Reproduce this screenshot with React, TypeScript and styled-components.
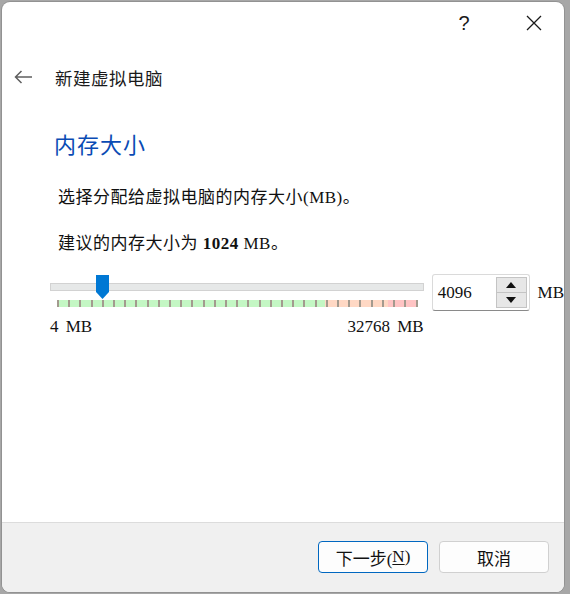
import React from "react";
import styled, { createGlobalStyle } from "styled-components";

const GlobalStyle = createGlobalStyle`
  html, body { margin: 0; padding: 0; background: #a7a7a7; }
  body { width: 570px; height: 594px; overflow: hidden; }
  * { box-sizing: border-box; }
`;

const SERIF_CJK = `"Liberation Serif", "Noto Sans CJK SC", serif`;
const SANS_CJK = `"Noto Sans CJK SC", "Noto Sans", sans-serif`;

const Dialog = styled.div`
  margin: 2px 6px 0 2px;
  height: 590px;
  background: #ffffff;
  border-radius: 8px;
  overflow: hidden;
  display: flex;
  flex-direction: column;
  box-shadow: 0 0 0 1px rgba(0, 0, 0, 0.12);
`;

const TitleBar = styled.div`
  height: 42px;
  display: flex;
  justify-content: flex-end;
  align-items: center;
  padding-right: 10px;
  gap: 30px;
`;

const TitleButton = styled.div`
  width: 40px;
  height: 32px;
  display: flex;
  align-items: center;
  justify-content: center;
  color: #1a1a1a;
  font-family: "Liberation Sans", sans-serif;
  font-size: 20px;
  font-weight: 400;
`;

const HeaderRow = styled.div`
  height: 66px;
  display: flex;
  align-items: center;
  padding-left: 12px;
  gap: 22px;
`;

const HeaderTitle = styled.div`
  font-family: ${SANS_CJK};
  font-size: 17.5px;
  color: #1a1a1a;
  letter-spacing: 0.5px;
`;

const Content = styled.div`
  padding-left: 52px;
  display: flex;
  flex-direction: column;
`;

const Heading = styled.div`
  margin-top: 18px;
  font-family: ${SANS_CJK};
  font-size: 22px;
  line-height: 30px;
  color: #0a4bb4;
  letter-spacing: 1px;
`;

const Paragraph = styled.div<{ $top: number }>`
  margin-top: ${(p) => p.$top}px;
  padding-left: 4px;
  font-family: ${SERIF_CJK};
  font-size: 17px;
  line-height: 24px;
  color: #111;
  letter-spacing: 0.5px;
  b { font-weight: 700; }
`;

const SliderRow = styled.div`
  margin-top: 18px;
  margin-left: -4px;
  display: flex;
  align-items: flex-start;
`;

const SliderColumn = styled.div`
  width: 374px;
  display: flex;
  flex-direction: column;
`;

const TrackArea = styled.div`
  position: relative;
  height: 26px;
  padding-top: 9px;
`;

const Track = styled.div`
  height: 8px;
  background: #e6e8e8;
  border: 1px solid #d2d2d2;
`;

const Handle = styled.svg`
  position: absolute;
  top: 1px;
  width: 13px;
  height: 25px;
`;

const Ticks = styled.div`
  margin: 0 6px 0 7px;
  height: 7px;
  display: flex;
  justify-content: space-between;
  background: linear-gradient(
    to right,
    #c4f7c4 0,
    #c4f7c4 74.3%,
    #ffd8c4 74.3%,
    #ffd8c4 91.8%,
    #ffc4c4 91.8%,
    #ffc4c4 100%
  );
`;

const Tick = styled.div`
  width: 2px;
  height: 100%;
  background: #a39a8e;
`;

const RangeLabels = styled.div`
  margin-top: 11px;
  display: flex;
  justify-content: space-between;
  font-family: ${SERIF_CJK};
  font-size: 17px;
  line-height: 18px;
  color: #111;
  word-spacing: 3px;
`;

const SpinBox = styled.div`
  margin-left: 8px;
  width: 98px;
  height: 37px;
  border: 1px solid #dadada;
  border-bottom-color: #8a8a8a;
  border-radius: 3px;
  background: #fff;
  display: flex;
  align-items: center;
  justify-content: space-between;
  padding: 0 2px 0 5px;
`;

const SpinValue = styled.div`
  font-family: ${SERIF_CJK};
  font-size: 17px;
  color: #111;
`;

const SpinButtons = styled.div`
  width: 31px;
  height: 31px;
  display: flex;
  flex-direction: column;
  border: 1px solid #c4c4c4;
  background: #e7e7e7;
`;

const SpinButton = styled.div<{ $down?: boolean }>`
  flex: 1;
  display: flex;
  align-items: center;
  justify-content: center;
  border-top: ${(p) => (p.$down ? "1px solid #c4c4c4" : "none")};
`;

const Unit = styled.div`
  margin-left: 8px;
  height: 37px;
  display: flex;
  align-items: center;
  font-family: ${SERIF_CJK};
  font-size: 17px;
  color: #111;
`;

const Footer = styled.div`
  margin-top: auto;
  height: 70px;
  background: #f0f0f0;
  border-top: 1px solid #dcdcdc;
  display: flex;
  justify-content: flex-end;
  gap: 11px;
  padding: 18px 15px 0 0;
`;

const Button = styled.div<{ $primary?: boolean }>`
  width: 110px;
  height: 32px;
  border-radius: 4px;
  border: 1px solid ${(p) => (p.$primary ? "#0067c0" : "#d0d0d0")};
  background: #fdfdfd;
  display: flex;
  align-items: center;
  justify-content: center;
  font-family: ${SERIF_CJK};
  font-size: 17px;
  color: #111;
  u { text-underline-offset: 2px; }
`;

const MIN = 4;
const MAX = 32768;
const VALUE = 4096;
const TICK_COUNT = 33;

export default function App() {
  const frac = (VALUE - MIN) / (MAX - MIN);
  const handleCenter = 7 + 1 + frac * 359;
  return (
    <>
      <GlobalStyle />
      <Dialog>
        <TitleBar>
          <TitleButton>?</TitleButton>
          <TitleButton>
            <svg width="16" height="16" viewBox="0 0 16 16">
              <path d="M1 1 L15 15 M15 1 L1 15" stroke="#1a1a1a" strokeWidth="1.3" fill="none" />
            </svg>
          </TitleButton>
        </TitleBar>
        <HeaderRow>
          <svg width="19" height="14" viewBox="0 0 19 14">
            <path d="M18 7 H1.5 M7.5 1 L1.5 7 L7.5 13" stroke="#5f5f5f" strokeWidth="1.5" fill="none" />
          </svg>
          <HeaderTitle>新建虚拟电脑</HeaderTitle>
        </HeaderRow>
        <Content>
          <Heading>内存大小</Heading>
          <Paragraph $top={28}>选择分配给虚拟电脑的内存大小(MB)。</Paragraph>
          <Paragraph $top={22}>
            建议的内存大小为 <b>1024</b> MB。
          </Paragraph>
          <SliderRow>
            <SliderColumn>
              <TrackArea>
                <Track />
                <Handle viewBox="0 0 13 25" style={{ left: `${handleCenter - 6.5}px` }}>
                  <path d="M0 0 H13 V17 L6.5 24 L0 17 Z" fill="#0078d4" />
                </Handle>
              </TrackArea>
              <Ticks>
                {Array.from({ length: TICK_COUNT }, (_, i) => (
                  <Tick key={i} />
                ))}
              </Ticks>
              <RangeLabels>
                <span>4 MB</span>
                <span>32768 MB</span>
              </RangeLabels>
            </SliderColumn>
            <SpinBox>
              <SpinValue>4096</SpinValue>
              <SpinButtons>
                <SpinButton>
                  <svg width="10" height="6" viewBox="0 0 10 6">
                    <path d="M0 6 L5 0 L10 6 Z" fill="#111" />
                  </svg>
                </SpinButton>
                <SpinButton $down>
                  <svg width="10" height="6" viewBox="0 0 10 6">
                    <path d="M0 0 L10 0 L5 6 Z" fill="#111" />
                  </svg>
                </SpinButton>
              </SpinButtons>
            </SpinBox>
            <Unit>MB</Unit>
          </SliderRow>
        </Content>
        <Footer>
          <Button $primary>
            下一步(<u>N</u>)
          </Button>
          <Button>取消</Button>
        </Footer>
      </Dialog>
    </>
  );
}
